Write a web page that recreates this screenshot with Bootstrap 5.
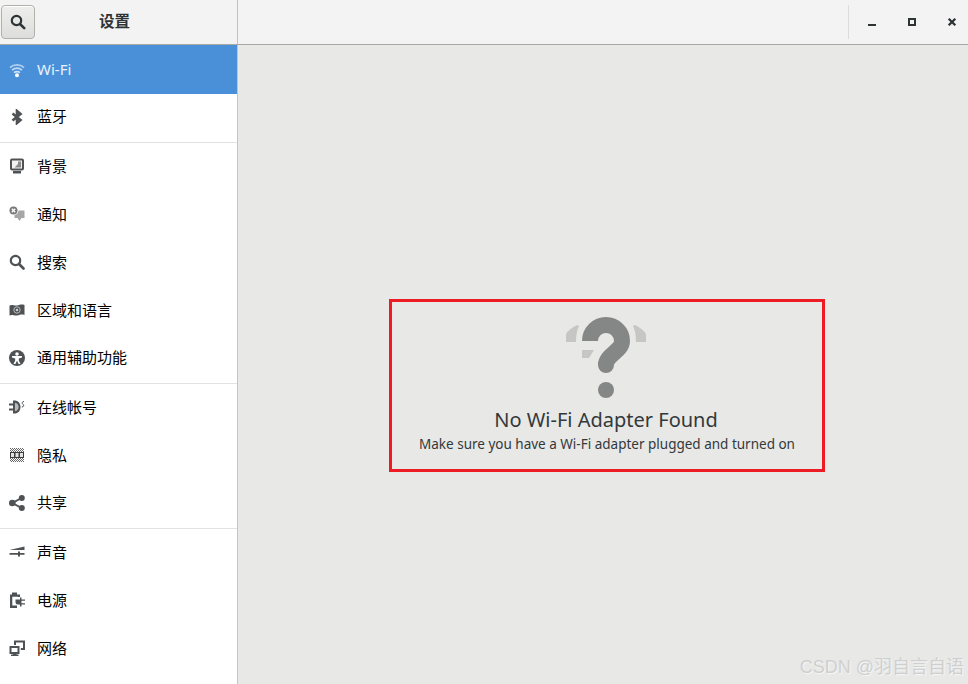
<!DOCTYPE html>
<html lang="zh-CN">
<head>
<meta charset="utf-8">
<title>设置</title>
<link href="https://cdn.jsdelivr.net/npm/bootstrap@5.3.0/dist/css/bootstrap.min.css" rel="stylesheet">
<style>
html,body{height:100%;overflow:hidden}
body{font-family:"Noto Sans","Noto Sans CJK SC",sans-serif;background:#e8e8e7;color:#2e3436}
.app-win{width:968px;height:684px;position:relative}
.head-bar{height:45px;background:#f3f3f3;border-bottom:1px solid #a8a8a4}
.head-left{width:238px;border-right:1px solid #c0c0bd;padding:5px 0 0 1px;height:44px}
.find-btn{width:34px;height:34px;padding:0;border:1px solid #b0b0ac;border-radius:4px;background:linear-gradient(#eeeeec,#dddddb);box-shadow:inset 0 1px 0 #fff}
.head-title{font-size:15.500px;font-weight:700;color:#2e3436;margin-left:64px;line-height:20px;margin-top:6px}
.ctl-sep{width:1px;height:34px;background:#dcdcda;margin:5px 0 0 0}
.ctl-box{width:40px;height:44px}
.ctl-box:last-child{width:39px}
.ctl-box svg{display:block}
.body-row{height:639px}
.side-list{width:238px;background:#fff;border-right:1px solid #c4c4c1;border-radius:0;height:639px}
.side-item{height:48px;padding:0 0 2px 9px;border:0;display:flex;align-items:center;font-size:15px;color:#000;background:#fff;border-radius:0!important}
.side-item svg{width:16px;height:16px;flex:none;margin-right:12px;color:#4f5254}
.side-item.active{background:#4a90d9;color:#e9f1fb;height:49px;margin:0;border:0;padding-bottom:0}
.side-item.active svg{color:#dbe9f8}
.side-item.sect-end{height:49px;border-bottom:1px solid #e2e2e0;padding-bottom:3px}
.main-pane{background:#e8e8e7;padding:254px 0 0 151px}
.note-box{width:436px;height:173px;border:3px solid #ed1c24;padding-top:14px}
.note-box svg{display:block}
.note-title{font-size:20px;line-height:26px;margin:9px 2px 0 0;color:#33393b;white-space:nowrap}
.note-sub{font-size:13.500px;line-height:20px;margin-top:1px;color:#33393b;white-space:nowrap}
.mark-text{position:absolute;right:4px;bottom:6px;font-family:"Liberation Sans","Noto Sans CJK SC",sans-serif;font-size:18px;line-height:22px;color:#cfcfcf;text-shadow:1px 1px 1px #f8f8f8}
</style>
</head>
<body>
<div class="app-win">
  <div class="head-bar d-flex">
    <div class="head-left d-flex align-items-start">
      <button class="btn find-btn d-flex align-items-center justify-content-center" type="button" aria-label="搜索">
        <svg width="16" height="16" viewBox="0 0 16 16"><circle cx="6.500" cy="6.500" r="4.700" fill="none" stroke="#2e3436" stroke-width="2.200"/><path d="M10 10l4.200 4.200" stroke="#2e3436" stroke-width="2.600" stroke-linecap="round"/></svg>
      </button>
      <div class="head-title">设置</div>
    </div>
    <div class="flex-grow-1"></div>
    <div class="d-flex">
      <div class="ctl-sep"></div>
      <div class="ctl-box"><svg width="40" height="44" viewBox="0 0 40 44"><rect x="19" y="24" width="8" height="2" fill="#2e3436"/></svg></div>
      <div class="ctl-box"><svg width="40" height="44" viewBox="0 0 40 44"><rect x="20" y="19" width="6" height="6" fill="none" stroke="#2e3436" stroke-width="2"/></svg></div>
      <div class="ctl-box"><svg width="39" height="44" viewBox="0 0 39 44"><path d="M19.700 18.700l6.600 6.600M26.300 18.700l-6.600 6.600" stroke="#2e3436" stroke-width="2.300"/></svg></div>
    </div>
  </div>
  <div class="body-row d-flex">
    <div class="list-group side-list flex-shrink-0">
      <a class="list-group-item side-item active"><svg viewBox="0 0 16 16" fill="none" stroke="currentColor" stroke-width="1.700"><path d="M1 5.500c4-3.400 10-3.400 14 0" opacity=".7"/><path d="M3 8.200c3-2.500 7-2.500 10 0" opacity=".8"/><path d="M5 10.700c1.800-1.400 4.200-1.400 6 0" opacity=".9"/><circle cx="8" cy="13.300" r="2" fill="#fff" stroke="none"/></svg>Wi-Fi</a>
      <a class="list-group-item side-item sect-end"><svg viewBox="0 0 16 16" fill="none" stroke="currentColor" stroke-width="2.600"><path d="M3.500 4.500l8 6.500-3.500 3V2l3.500 3-8 6.500"/></svg>蓝牙</a>
      <a class="list-group-item side-item"><svg viewBox="0 0 16 16"><path fill="currentColor" d="M3 .5h10a2 2 0 0 1 2 2v8a2 2 0 0 1-2 2H3a2 2 0 0 1-2-2v-8a2 2 0 0 1 2-2z"/><path fill="#f2f2f2" d="M3 2.500h10v8H3z"/><path fill="#8a8a8a" d="M9 3.500h3v6H5.500L9 6z"/><path fill="currentColor" d="M4 13h8v2.500H4z"/></svg>背景</a>
      <a class="list-group-item side-item"><svg viewBox="0 0 16 16"><path fill="#a6a6a6" d="M5.500 4.500h10v7.500h-3l-2 3-2-3h-3z"/><circle cx="5" cy="4.500" r="4.500" fill="#fff"/><circle cx="4.500" cy="4.500" r="4" fill="#77797b"/><path d="M2.800 2.800l3.400 3.400M6.200 2.800L2.800 6.200" stroke="#fff" stroke-width="1.300"/></svg>通知</a>
      <a class="list-group-item side-item"><svg viewBox="0 0 16 16" fill="none" stroke="currentColor"><circle cx="6.500" cy="6.500" r="4.700" stroke-width="2.200"/><path d="M10 10l4.500 4.500" stroke-width="2.600" stroke-linecap="round"/></svg>搜索</a>
      <a class="list-group-item side-item"><svg viewBox="0 0 16 16"><path fill="currentColor" d="M.5 3.500c3-1.500 4.500.5 7.500 0s4.500-1.500 7.500-.5v10c-3-1-4.500 0-7.500.5s-4.500-1.500-7.500 0z"/><circle cx="8" cy="8" r="3.200" fill="none" stroke="#bbb" stroke-width="1"/><circle cx="8" cy="8" r="1.300" fill="#ccc"/></svg>区域和语言</a>
      <a class="list-group-item side-item sect-end"><svg viewBox="0 0 16 16"><circle cx="8" cy="8" r="8" fill="currentColor"/><circle cx="8" cy="4" r="1.800" fill="#fff"/><path d="M3 6h10v1.600l-3.200.8v2l1.700 3.600H9.600L8 10.800 6.400 14H4.500l1.700-3.600v-2L3 7.600z" fill="#fff"/></svg>通用辅助功能</a>
      <a class="list-group-item side-item"><svg viewBox="0 0 16 16"><path fill="currentColor" d="M4 1.500h1.500c3.500 0 6 2.700 6 6.500s-2.500 6.500-6 6.500H4z"/><path fill="#fff" d="M6 3.700c2.200.4 3.600 2 3.600 4.300S8.200 11.900 6 12.300z" opacity=".6"/><path stroke="currentColor" stroke-width="2" d="M0 5.500h4M0 10.500h4"/><path d="M15 2.500c-2 0-2.300 2-1 2.800s.8 2.700-1.200 2.700" fill="none" stroke="currentColor" stroke-width="1"/></svg>在线帐号</a>
      <a class="list-group-item side-item"><svg viewBox="0 0 16 16"><defs><pattern id="dots" width="2" height="2" patternUnits="userSpaceOnUse"><rect width="1" height="1" fill="#666"/><rect x="1" y="1" width="1" height="1" fill="#666"/></pattern></defs><rect x="1" y="1" width="14" height="14" fill="url(#dots)"/><rect x="1" y="5" width="14" height="6" fill="#3c3c3c"/><rect x="2" y="6" width="3" height="4" fill="#e4e4e4"/><rect x="6.500" y="6" width="3" height="4" fill="#e4e4e4"/><rect x="11" y="6" width="3" height="4" fill="#e4e4e4"/></svg>隐私</a>
      <a class="list-group-item side-item sect-end"><svg viewBox="0 0 16 16" fill="currentColor"><path d="M12.500 3L3.500 8l9 5" fill="none" stroke="currentColor" stroke-width="2"/><circle cx="12.800" cy="3" r="3"/><circle cx="3.300" cy="8" r="3.300"/><circle cx="12.800" cy="13" r="3"/></svg>共享</a>
      <a class="list-group-item side-item"><svg viewBox="0 0 16 16" fill="currentColor"><path d="M.5 6L15.500 2.500v3.500zM.5 9h8.500V7.500h2V9h4.500v1.800H11v1.700H9v-1.700H.5z"/></svg>声音</a>
      <a class="list-group-item side-item"><svg viewBox="0 0 16 16" fill="currentColor"><path d="M1 2.500h2V.5h5v2h3V5H9V4.700H3.300v8.800H8V16H1z"/><path d="M6.500 7.500H11V5.500h1.500v2H16v1.300h-3.500v2.400H16v1.300h-3.500v2H11v-2H9a2.500 2.500 0 0 1-2.500-2.500z"/></svg>电源</a>
      <a class="list-group-item side-item"><svg viewBox="0 0 16 16" fill="currentColor"><path d="M.5 6h10v8H7.500v.5h2V16H2v-1.500h2V14H.5zm2 2v4h6V8z"/><path d="M5 .5h11v9.500h-4.200V8H14V2.500H7V5H5z"/></svg>网络</a>
    </div>
    <div class="main-pane flex-grow-1">
      <div class="note-box d-flex flex-column align-items-center">
        <svg width="82" height="82" viewBox="566 316 82 82">
          <path fill="#c6c7c5" d="M566 342v-8q3-5 11-9l2 1q-3 6-3 16zM646 342v-8q-3-5-11-9l-2 1q3 6 3 16zM582 350h12l-5 8h-7z"/>
          <path fill="none" stroke="#858787" stroke-width="16" d="M590 341a16 16 0 0 1 32 0c0 10-16 14-16 24"/>
          <circle cx="606" cy="365" r="8" fill="#858787"/>
          <circle cx="606" cy="390" r="8" fill="#858787"/>
        </svg>
        <div class="note-title">No Wi-Fi Adapter Found</div>
        <div class="note-sub">Make sure you have a Wi-Fi adapter plugged and turned on</div>
      </div>
    </div>
  </div>
  <div class="mark-text">CSDN @羽自言自语</div>
</div>
<script src="https://cdn.jsdelivr.net/npm/bootstrap@5.3.0/dist/js/bootstrap.bundle.min.js"></script>
</body>
</html>
